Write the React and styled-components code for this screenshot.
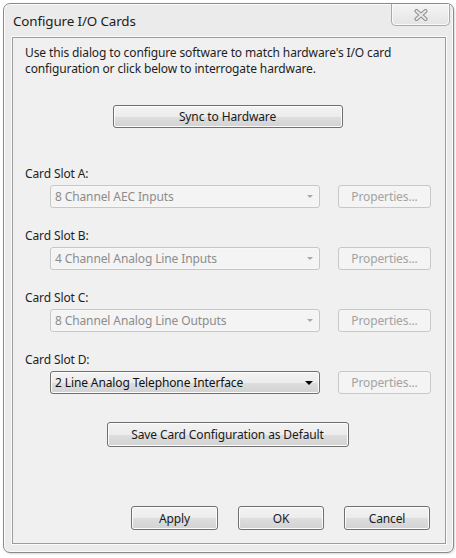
import React from 'react'
import styled, { createGlobalStyle } from 'styled-components'

const GlobalStyle = createGlobalStyle`
  html, body {
    margin: 0;
    padding: 0;
    background: #ffffff;
  }
  body {
    font-family: "Noto Sans", "Open Sans", sans-serif;
    font-size: 12px;
    letter-spacing: -0.12px;
    color: #1e1e1e;
  }
`

const slots = [
  { label: 'Card Slot A:', value: '8 Channel AEC Inputs', enabled: false },
  { label: 'Card Slot B:', value: '4 Channel Analog Line Inputs', enabled: false },
  { label: 'Card Slot C:', value: '8 Channel Analog Line Outputs', enabled: false },
  { label: 'Card Slot D:', value: '2 Line Analog Telephone Interface', enabled: true },
]

const App = () => {
  return (
    <>
      <GlobalStyle />
      <Page>
        <Window>
          <TitleBar>
            <Title>Configure I/O Cards</Title>
            <CloseButton>
              <svg width="14" height="12" viewBox="0 0 14 12">
                <path d="M2.5 2 L11.5 10 M11.5 2 L2.5 10" stroke="#8d8d8d" strokeWidth="4" strokeLinecap="round" />
                <path d="M2.5 2 L11.5 10 M11.5 2 L2.5 10" stroke="#e9e9e9" strokeWidth="2" strokeLinecap="round" />
              </svg>
            </CloseButton>
          </TitleBar>
          <Panel>
            <Description>
              Use this dialog to configure software to match hardware's I/O card
              configuration or click below to interrogate hardware.
            </Description>
            <Centered>
              <Button width={230} height={23}>Sync to Hardware</Button>
            </Centered>
            <Slots>
              {slots.map(slot => (
                <Slot key={slot.label}>
                  <SlotLabel>{slot.label}</SlotLabel>
                  <SlotRow>
                    <Combo enabled={slot.enabled}>
                      <span>{slot.value}</span>
                      <Arrow enabled={slot.enabled} />
                    </Combo>
                    <PropsButton>Properties...</PropsButton>
                  </SlotRow>
                </Slot>
              ))}
            </Slots>
            <Centered>
              <Button width={242} height={25}>Save Card Configuration as Default</Button>
            </Centered>
            <Spacer />
            <Footer>
              <Button width={87} height={24}>Apply</Button>
              <Button width={86} height={24}>OK</Button>
              <Button width={86} height={24}>Cancel</Button>
            </Footer>
          </Panel>
        </Window>
      </Page>
    </>
  )
}

export default App

const Page = styled.div`
  padding: 3px 2px 6px 3px;
`

const Window = styled.div`
  width: 451px;
  height: 550px;
  box-sizing: border-box;
  border: 1px solid #8a8a8a;
  border-radius: 7px;
  background: #ebebeb;
  box-shadow: inset 0 0 0 1px #fbfbfb, 1px 1px 2px rgba(0, 0, 0, 0.15);
  display: flex;
  flex-direction: column;
  padding: 0 7px 8px 8px;
`

const TitleBar = styled.div`
  height: 33px;
  display: flex;
  align-items: flex-start;
  justify-content: space-between;
  flex-shrink: 0;
`

const Title = styled.div`
  font-size: 13.4px;
  color: #1c1c1c;
  padding-left: 1px;
  padding-top: 9px;
  line-height: 16px;
`

const CloseButton = styled.div`
  width: 59px;
  height: 22px;
  margin-right: -4px;
  box-sizing: border-box;
  border: 1px solid #a9a9a9;
  border-top: none;
  border-radius: 0 0 5px 5px;
  background: linear-gradient(#f4f4f4, #e4e4e4);
  box-shadow: inset 0 0 0 1px #fafafa;
  display: flex;
  align-items: center;
  justify-content: center;
`

const Panel = styled.div`
  flex: 1;
  border: 1px solid #9c9c9c;
  box-shadow: 0 0 0 1px #fbfbfb;
  background: #f0f0f0;
  display: flex;
  flex-direction: column;
  padding: 7px 14px 13px 12px;
`

const Description = styled.div`
  line-height: 16px;
  color: #1e1e1e;
`

const Centered = styled.div`
  display: flex;
  justify-content: center;
  margin-top: 28px;
  padding-right: 1px;
`

const Button = styled.div`
  width: ${p => p.width}px;
  height: ${p => p.height}px;
  box-sizing: border-box;
  border: 1px solid #707070;
  border-radius: 3px;
  background: linear-gradient(#f3f3f3 0%, #ececec 50%, #dedede 51%, #d2d2d2 100%);
  box-shadow: inset 0 0 0 1px #fcfcfc;
  display: flex;
  align-items: center;
  justify-content: center;
  color: #1a1a1a;
`

const Slots = styled.div`
  display: flex;
  flex-direction: column;
  margin-top: 38px;
  gap: 20px;
`

const Slot = styled.div`
  display: flex;
  flex-direction: column;
  gap: 3px;
`

const SlotLabel = styled.div`
  line-height: 16px;
  color: #1e1e1e;
`

const SlotRow = styled.div`
  display: flex;
  align-items: center;
  padding-left: 25px;
  gap: 18px;
`

const Combo = styled.div`
  width: 270px;
  height: 23px;
  box-sizing: border-box;
  border: 1px solid ${p => (p.enabled ? '#707070' : '#c6c6c6')};
  border-radius: 3px;
  background: ${p =>
    p.enabled
      ? 'linear-gradient(#f3f3f3 0%, #ececec 50%, #dedede 51%, #d2d2d2 100%)'
      : '#f4f4f4'};
  box-shadow: inset 0 0 0 1px ${p => (p.enabled ? '#fcfcfc' : '#f7f7f7')};
  color: ${p => (p.enabled ? '#111' : '#8c8c8c')};
  display: flex;
  align-items: center;
  justify-content: space-between;
  padding: 0 6px 0 4px;
`

const Arrow = styled.span`
  width: 0;
  height: 0;
  border-left: ${p => (p.enabled ? 4 : 3)}px solid transparent;
  border-right: ${p => (p.enabled ? 4 : 3)}px solid transparent;
  border-top: ${p => (p.enabled ? 4 : 3)}px solid ${p => (p.enabled ? '#000' : '#a8a8a8')};
`

const PropsButton = styled.div`
  width: 93px;
  height: 23px;
  box-sizing: border-box;
  border: 1px solid #c8c8c8;
  border-radius: 3px;
  background: #f4f4f4;
  color: #a3a3a3;
  display: flex;
  align-items: center;
  justify-content: center;
`

const Spacer = styled.div`
  flex: 1;
`

const Footer = styled.div`
  display: flex;
  justify-content: flex-end;
  gap: 20px;
  padding-right: 1px;
`
